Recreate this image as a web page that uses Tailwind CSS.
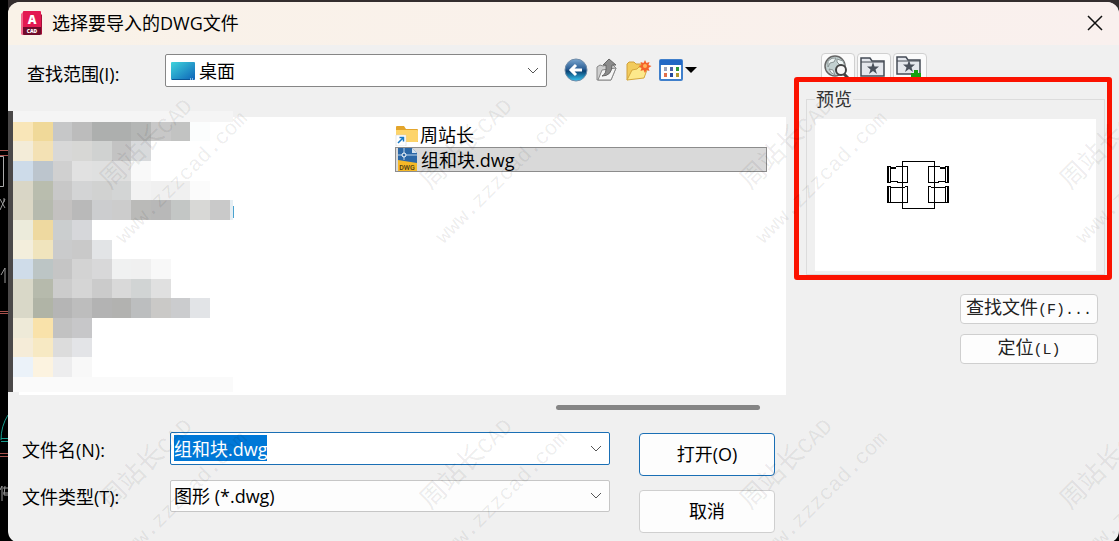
<!DOCTYPE html>
<html lang="zh-CN">
<head>
    <meta charset="UTF-8">
    <meta name="viewport" content="width=device-width, initial-scale=1.0">
    <title>选择要导入的DWG文件</title>
    <script src="https://cdn.jsdelivr.net/npm/@tailwindcss/browser@4"></script>
</head>
<body class="relative min-h-screen overflow-hidden bg-black pl-2 pt-[2px] font-['Open_Sans','Noto_Sans_CJK_SC',sans-serif] text-lg leading-6 text-black">
    <!-- drawing area behind the dialog -->
    <div class="absolute inset-x-0 top-0 h-8 bg-[#332d2e]"></div>
    <svg class="absolute left-0 top-0 bg-black" width="8" height="541" fill="none" stroke-width="1">
        <path d="M0 150.500h8M0 155.500h8M0 311.500h8M0 313.500h8M0 453.500h8M0 456.500h8" stroke="#a8524c"/>
        <path d="M0 156.500h3.500V186.500H0" stroke="#aaa"/>
        <path d="M0 199l5 9M5 199l-5 11M4 198v4M1 275l4-7v15M0 490l2-4v15M3 488h5M3 493h5M5 486l-1 9h4" stroke="#999"/>
        <path d="M8 415Q1 426 1 440M1 438.500h7M1 441.500h7" stroke="#159a8c"/>
    </svg>

    <div class="relative min-h-screen overflow-hidden rounded-xl bg-[#f0f0f0]">
        <header class="flex h-[43px] items-center bg-linear-to-r from-[#f9f2e8] to-[#f9f0ee] px-3 pb-[2px]">
            <svg width="24" height="26" viewBox="0 0 24 26">
                <path d="M1 4l3-3v24H2l-1-1z" fill="#f2688c"/>
                <path d="M3 2q0-1 1-1h16q1 0 1 1v16H3z" fill="#e31951"/>
                <path d="M21 4l1 1v19l-1 1z" fill="#a50f38"/>
                <path d="M3 17h18v7q0 1-1 1H4q-1 0-1-1z" fill="#6f0b2b"/>
                <text x="12" y="14" text-anchor="middle" font-family="Open Sans" font-size="12" font-weight="800" fill="#fff">A</text>
                <text x="12" y="23" text-anchor="middle" font-family="Open Sans" font-size="5" font-weight="800" fill="#fff">CAD</text>
            </svg>
            <h1 class="ml-2 flex-1">选择要导入的DWG文件</h1>
            <button type="button" aria-label="关闭" class="p-1">
                <svg width="16" height="16" fill="none" stroke="#111" stroke-width="1.500"><path d="M1 1l14 14M15 1L1 15"/></svg>
            </button>
        </header>

        <main class="flex items-start">
            <div class="min-w-0 flex-1">
                <!-- look in -->
                <div class="flex h-[72px] items-start pl-[19px] pt-[9px]">
                    <label for="lookIn" class="w-[138px] pt-2">查找范围(I):</label>
                    <div class="flex h-[33px] w-[382px] items-center rounded-xs border border-[#868686] bg-white pl-[5px] pr-[7px]">
                        <svg width="24" height="18" viewBox="0 0 24 18">
                            <defs><linearGradient id="desk" x1="0" y1="0" x2="1" y2="1"><stop offset="0" stop-color="#3fd4dc"/><stop offset="1" stop-color="#0d62b8"/></linearGradient></defs>
                            <rect width="24" height="18" rx="1" fill="url(#desk)"/>
                            <path d="M1 17.500h18" stroke="#0b5697"/><path d="M19 17h1M21 17h1" stroke="#fff"/>
                        </svg>
                        <select id="lookIn" class="ml-[4px] h-7 flex-1 appearance-none bg-transparent outline-none">
                            <option>桌面</option>
                        </select>
                        <svg width="12" height="8" fill="none" stroke="#555"><path d="M1 1l5 5 5-5"/></svg>
                    </div>
                    <div class="ml-[17px] flex h-[32px] items-center gap-[7px]">
                        <button type="button" aria-label="返回">
                            <svg width="24" height="24" viewBox="0 0 24 24">
                                <defs><linearGradient id="back" x1="0" y1="0" x2="0" y2="1"><stop offset="0" stop-color="#7ba6cf"/><stop offset=".45" stop-color="#2c5f95"/><stop offset=".55" stop-color="#0b4273"/><stop offset="1" stop-color="#35c4f0"/></linearGradient></defs>
                                <circle cx="12" cy="12" r="11" fill="url(#back)" stroke="#6f8ba8"/>
                                <path d="M18 12H7M12 7l-5 5 5 5" fill="none" stroke="#fff" stroke-width="3"/>
                            </svg>
                        </button>
                        <button type="button" aria-label="上一级">
                            <svg width="24" height="24" viewBox="0 0 24 24" stroke-linejoin="round">
                                <path d="M2 22V9l3-2 3 1 9-2 4 4-5 12z" fill="#cfcfcf" stroke="#888"/>
                                <path d="M3 22l4-10 14-2-5 12z" fill="#f5f5f5" stroke="#888"/>
                                <path d="M7 18q5-2 4-11H8l6-6 7 6h-4q0 11-10 11z" fill="#8c8c8c" stroke="#666"/>
                            </svg>
                        </button>
                        <button type="button" aria-label="新建文件夹">
                            <svg width="26" height="24" viewBox="0 0 26 24" stroke-linejoin="round">
                                <path d="M1 22V6l2-2h5l2 2h8v5z" fill="#f2cb5c" stroke="#d0a03a"/>
                                <path d="M1 22l5-10 5-1 2-2h9l-4 11z" fill="#fde98b" stroke="#d5a83c"/>
                                <path d="M19 2l1.500 3 3-1-1 3 3 1-3 2 1 3-3-1-1.500 3-1.500-3-3 1 1-3-3-2 3-1-1-3 3 1z" fill="#f4622c"/>
                                <circle cx="19" cy="8" r="2" fill="#ffb35b"/>
                            </svg>
                        </button>
                        <button type="button" aria-label="查看" class="flex items-center gap-[2px]">
                            <svg width="24" height="24" viewBox="0 0 24 24">
                                <rect x="1" y="2" width="22" height="20" rx="1" fill="#fff" stroke="#3f7fcb" stroke-width="2"/>
                                <path d="M1 2h22v5H1z" fill="#2268c5"/>
                                <path d="M5 9h3v4H5z" fill="#9aa2b8"/><path d="M11 9h3v4h-3z" fill="#4a64a8"/><path d="M17 9h3v4h-3z" fill="#2d9837"/>
                                <path d="M5 15h3v4H5z" fill="#e2714b"/><path d="M11 15h3v4h-3z" fill="#234a9c"/><path d="M17 15h3v4h-3z" fill="#b59a30"/>
                            </svg>
                            <svg width="12" height="6"><path d="M0 0h12L6 6z"/></svg>
                        </button>
                    </div>
                </div>

                <!-- file list -->
                <div class="relative ml-[11px] h-[278px] bg-white pl-[376px] pr-[19px] pt-[6px]">
                    <svg id="mosaic" class="absolute -left-[14px] -top-[6px]" width="230" height="282" shape-rendering="crispEdges" aria-hidden="true"></svg>
                    <ul>
                        <li class="flex h-6 items-center gap-px">
                            <svg width="24" height="22" viewBox="0 0 24 22">
                                <path d="M1 3q0-1 1-1h7l2 3h11q1 0 1 1v12H1z" fill="#e3a52c"/>
                                <path d="M1 6h21q1 0 1 1v10q0 1-1 1H2q-1 0-1-1z" fill="#fdd46a"/>
                                <path d="M1 11h10v11H1z" fill="#fff" stroke="#ccc" stroke-width=".5"/>
                                <path d="M3 19l5-5M4.500 13.500H8.500V17.500" fill="none" stroke="#1777c4" stroke-width="1.500"/>
                            </svg>
                            周站长
                        </li>
                        <li class="flex h-[25px] items-center gap-1 border border-[#8c8c8c] bg-[#d9d9d9] pl-[2px]" aria-selected="true">
                            <svg width="19" height="23" viewBox="0 0 19 23">
                                <path d="M0 0h14l5 5v18H0z" fill="#2b67a6"/>
                                <path d="M0 12l19 3v8H0z" fill="#f5b927"/>
                                <path d="M14 0l5 5h-5z" fill="#d7e4f0"/>
                                <path d="M6 0v12M0 7h19" stroke="#bcd5eb"/><circle cx="6" cy="7" r="2" fill="#2b67a6" stroke="#fff"/>
                                <text x="9" y="22" text-anchor="middle" font-family="Roboto" font-size="7" font-weight="500" fill="#4a3a10">DWG</text>
                            </svg>
                            组和块.dwg
                        </li>
                    </ul>
                </div>
                <div class="flex justify-end pr-[26px] pt-[10px]"><div class="h-[5px] w-[204px] rounded-full bg-[#858585]"></div></div>

                <!-- name, type and actions -->
                <form class="flex gap-[29px] pb-2 pl-[14px] pr-[11px] pt-[22px]">
                    <div class="flex flex-1 flex-col gap-[15px]">
                        <div class="flex h-[33px] items-center">
                            <label for="fileName" class="w-[148px] pt-[2px]">文件名(N):</label>
                            <div class="flex h-full flex-1 items-center rounded-xs border border-[#1a6fb5] bg-white pl-[3px] pr-[7px]">
                                <input id="fileName" type="text" value="组和块.dwg" class="h-7 min-w-0 flex-1 bg-transparent pb-[2px] outline-none selection:bg-[#0078d7] selection:text-white">
                                <svg width="12" height="8" fill="none" stroke="#555"><path d="M1 1l5 5 5-5"/></svg>
                            </div>
                        </div>
                        <div class="flex h-8 items-center">
                            <label for="fileType" class="w-[148px] pt-[2px]">文件类型(T):</label>
                            <div class="flex h-full flex-1 items-center rounded-xs border border-[#c6c6c6] bg-[#fdfdfd] pl-[3px] pr-[7px]">
                                <select id="fileType" class="h-7 flex-1 appearance-none bg-transparent outline-none">
                                    <option>图形 (*.dwg)</option>
                                </select>
                                <svg width="12" height="8" fill="none" stroke="#555"><path d="M1 1l5 5 5-5"/></svg>
                            </div>
                        </div>
                    </div>
                    <div class="flex w-[136px] flex-col gap-[14px] pt-px">
                        <button type="submit" class="h-[43px] rounded-sm border border-[#1a6fb5] bg-[#fdfdfd] pb-[2px]">打开(O)</button>
                        <button type="button" class="h-[43px] rounded-sm border border-[#cfcfcf] bg-[#fdfdfd] pb-[2px]">取消</button>
                    </div>
                </form>
            </div>

            <!-- preview column -->
            <aside class="w-[333px] pl-2 pr-[7px] pt-2">
                <div class="flex gap-[2px] pl-[27px]">
                    <button type="button" aria-label="搜索 Web" class="flex h-[28px] w-[34px] justify-center rounded-sm border border-[#d0d0d0] bg-[#fbfbfb]">
                        <svg width="28" height="26" viewBox="1 0 28 26" fill="none">
                            <circle cx="12" cy="12" r="10" fill="#c3d1d1" stroke="#666" stroke-width="1.500"/>
                            <path d="M5 7q4-4 8-3l-2 4-4 1-2 4zM14 5l6 2 2 5-5-1-3-3zM6 15l4 1 2 5q-5-2-6-6z" fill="#eef5f5" stroke="#8a9494"/>
                            <circle cx="18" cy="16" r="5" fill="#f7f7f7" stroke="#444" stroke-width="2"/><path d="M21 20l4 4" stroke="#444" stroke-width="3"/>
                        </svg>
                    </button>
                    <button type="button" aria-label="收藏夹" class="flex h-[28px] w-[34px] justify-center rounded-sm border border-[#d0d0d0] bg-[#fbfbfb]">
                        <svg width="28" height="26" viewBox="1 0 28 26">
                            <path d="M2 22V4h9l2 3h12v15z" fill="#e4e7ed" stroke="#444b55" stroke-width="1.500"/><path d="M2 8h23" stroke="#444b55"/>
                            <path d="M14 8l1.500 4.500H20l-3.500 3L18 20l-4-3-4 3 1.500-4.500-3.500-3h4.500z" fill="#4a515c"/>
                        </svg>
                    </button>
                    <button type="button" aria-label="添加到收藏夹" class="flex h-[28px] w-[34px] justify-center rounded-sm border border-[#d0d0d0] bg-[#fbfbfb]">
                        <svg width="28" height="26" viewBox="1 0 28 26">
                            <path d="M2 20V3h9l2 3h12v14z" fill="#e4e7ed" stroke="#444b55" stroke-width="1.500"/><path d="M2 7h23" stroke="#444b55"/>
                            <path d="M14 6l1.500 4.500H20l-3.500 3L18 18l-4-3-4 3 1.500-4.500-3.500-3h4.500z" fill="#4a515c"/>
                            <path d="M21 16v10M16 21h10" stroke="#18a010" stroke-width="4"/>
                        </svg>
                    </button>
                </div>
                <div class="relative -mt-1 h-[203px] rounded-[3px] border-[5px] border-[#fb1200] bg-[#f0f0f0] pl-[7px] pr-[2px] pt-[5px]">
                    <fieldset class="h-[188px] border border-[#dcdcdc] px-2">
                        <legend class="px-px leading-6 text-[#333]">预览</legend>
                        <div class="mt-2 h-[152px] bg-white">
                            <svg width="150" height="100" viewBox="815 119 150 100" fill="none" stroke="#000" shape-rendering="crispEdges">
                                <path d="M902.500 161.500h32v47h-32z"/>
                                <g id="chairs">
                                    <path d="M888 166v17M888 186v17" stroke-width="2"/>
                                    <path d="M890.500 166v16M890.500 187v15M887 166.500h4M887 182.500h4M887 186.500h4M887 202.500h4M896 166.500h11.500v16H897M891 181.500h7M891 187.500h14M891 202.500h14M905 186.500h2.500v16H905"/>
                                    <path d="M891 168h5" stroke-width="2"/>
                                </g>
                                <use href="#chairs" transform="matrix(-1 0 0 1 1836 0)"/>
                            </svg>
                        </div>
                    </fieldset>
                </div>
                <div class="mt-[14px] flex flex-col items-end gap-[10px] pr-[14px]">
                    <button type="button" class="h-[30px] w-[138px] rounded-sm border border-[#cfcfcf] bg-[#fdfdfd] leading-6 whitespace-nowrap text-[#222]">查找文件<span class="font-['Liberation_Mono',monospace] text-[15px]">(F)...</span></button>
                    <button type="button" class="h-[30px] w-[138px] rounded-sm border border-[#cfcfcf] bg-[#fdfdfd] leading-6 whitespace-nowrap text-[#222]">定位<span class="font-['Liberation_Mono',monospace] text-[15px]">(L)</span></button>
                </div>
            </aside>
        </main>
    </div>

    <!-- watermark -->
    <svg class="pointer-events-none absolute inset-0 h-full w-full" fill="#000" fill-opacity=".08" text-anchor="middle" font-family="Liberation Mono, Noto Sans CJK SC, monospace" aria-hidden="true">
        <defs>
            <g id="mark">
                <text transform="translate(152 149) rotate(-45)" font-size="26">周站长<tspan font-size="22">CAD</tspan></text>
                <text transform="translate(186 182) rotate(-45)" font-size="21">www.zzzcad.com</text>
            </g>
        </defs>
        <use href="#mark"/><use href="#mark" x="320"/><use href="#mark" x="640"/><use href="#mark" x="960"/>
        <use href="#mark" y="320"/><use href="#mark" x="320" y="320"/><use href="#mark" x="640" y="320"/><use href="#mark" x="960" y="320"/>
    </svg>

    <script>
        // pixelated cover over the private file names
        const xs = [8, 28, 48, 67, 87, 107, 126, 146, 166, 185, 205, 225];
        const ys = [11, 30, 50, 70, 89, 109, 129, 148, 168, 187, 207, 227, 246, 266];
        const rows = [
            'f9e6b8 f0d999 c6c7c8 bcbcbc adafae adafae b4b6b5 c8c8c8 c2c3c2 fbfdfd',
            'f3ecd8 f3e1b4 d8d8d8 d7d7d5 d0d2d1 c3c3c3 d8dadc',
            'cddbe9 bcc5cd d0d0d0 e1e1e1 dfe0e0 dfdfdf f9f9f9',
            'd9d6c6 b9bdae c8c8c8 d3d4d5 d1d2d1 d3d5d5 f2f2f2 f0f0f0 f0f0f0 fbfbfb',
            'dbd7c5 b6baae c3c1c0 b9b9b9 cccdcf cccccc babab8 b8b8b8 c3c6c5 d8d8d6 c9c9c9',
            'ecebdb eed9a0 cbcecf d6d7da',
            'f3eedc f0e4bd cacbcc c9c9c9 e2e4e6',
            'cfdce9 bcc5c5 c5c5c5 d3d3d3 d8d8d9 f0f1f1 f0f0f0 f8f8f8',
            'd9d8c8 b6baac cccccc d5d5d5 cbcbcb d9d9d9 d1d4d4 e0e0e0',
            'd9d8c8 b0b4a6 b5b5b5 bdbdbd b3b3b3 b2b2b0 bcbebf cac9c7 cbccce e2e4e7',
            'eeead8 f9e2aa c2c2c2 c7c7c9',
            'f5ecd8 f7e9c3 dcdcdc e3e4e7',
            'ebf2f9 fcf3e0 ededee f8f8f8',
        ];
        const rect = (x, y, w, h, c) => `<rect x="${x}" y="${y}" width="${w}" height="${h}" fill="#${c}"/>`;
        let cells = rect(0, 0, 8, 281, '4b4949') + rect(8, 0, 220, 11, 'f5f5f5') + rect(8, 266, 220, 15, 'fafafa');
        rows.forEach((row, r) => row.split(' ').forEach((c, i) => {
            cells += rect(xs[i], ys[r], xs[i + 1] - xs[i], ys[r + 1] - ys[r], c);
        }));
        cells += rect(225, 89, 3, 20, 'e6eef3') + rect(228, 95, 1, 12, '4aa3d0');
        document.getElementById('mosaic').innerHTML = cells;

        const fileName = document.getElementById('fileName');
        fileName.focus({ preventScroll: true });
        fileName.setSelectionRange(0, fileName.value.length);
    </script>
</body>
</html>
